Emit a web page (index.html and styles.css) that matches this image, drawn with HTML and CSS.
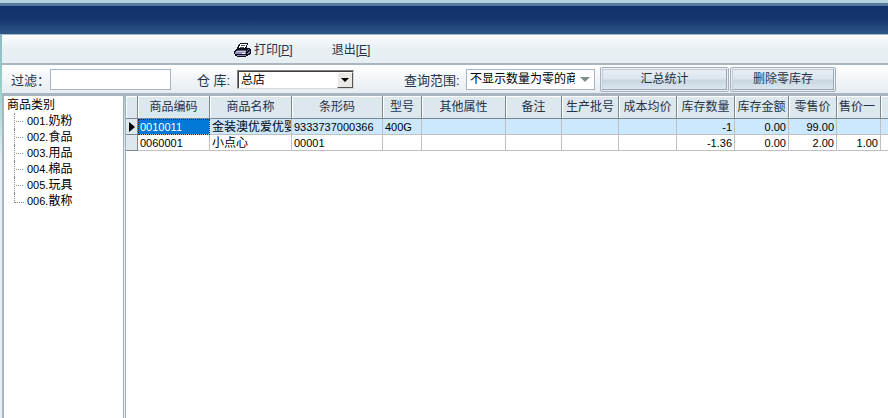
FILE: index.html
```html
<!DOCTYPE html>
<html lang="zh-CN">
<head>
  <meta charset="UTF-8">
  <title>库存查询</title>
  <link rel="stylesheet" href="styles.css">
</head>
<body>

  <div class="banner"></div>

  <div class="window">
    <div class="menu">
      <button type="button" class="menu-btn">
        <svg class="printer" width="17" height="16" viewBox="0 0 17 16" shape-rendering="crispEdges">
          <path d="M6 1h8v2h-1v3h3v1h1v5h-1v1h-2v1h-2v1H3v-1H1v-2H0V9h1V8h1V7h1V5h1V3h1V2h1z" fill="#10101c"/>
          <path d="M6 2h7v1h-1v2h-1v1H5V4h1z" fill="#fff"/>
          <path d="M7 3h4v1H7zM6 5h4v1H6z" fill="#555"/>
          <path d="M3 8h9v1H3z" fill="#5c5c74"/>
          <path d="M2 9h10v1H2z" fill="#c8c8e0"/>
          <path d="M1 10h11v2H1zM3 13h9v1H3z" fill="#8c8cbc"/>
          <path d="M8 11h3v1H8z" fill="#fff"/>
          <path d="M13 8h1V7h1v1h-1v1h-1zM13 11h1v-1h1V9h1v2h-1v1h-2z" fill="#7474a8"/>
        </svg>
        <span>打印[<u>P</u>]</span>
      </button>
      <button type="button" class="menu-btn">退出[<u>E</u>]</button>
    </div>

    <form class="filters">
      <label for="filter">过滤：</label>
      <input type="text" id="filter" name="filter">

      <label for="store" class="store-label">仓 库:</label>
      <div class="select store">
        <select id="store" name="store">
          <option>总店</option>
        </select>
        <span class="drop"></span>
      </div>

      <label for="range" class="range-label">查询范围:</label>
      <div class="select range">
        <select id="range" name="range">
          <option>不显示数量为零的商品</option>
        </select>
        <span class="drop"></span>
      </div>

      <button type="button" class="action summary">汇总统计</button>
      <button type="button" class="action">删除零库存</button>
    </form>

    <div class="content">
      <div class="tree">
        <div class="tree-root">商品类别</div>
        <ul>
          <li><span class="num">001.</span>奶粉</li>
          <li><span class="num">002.</span>食品</li>
          <li><span class="num">003.</span>用品</li>
          <li><span class="num">004.</span>棉品</li>
          <li><span class="num">005.</span>玩具</li>
          <li><span class="num">006.</span>散称</li>
        </ul>
      </div>

      <div class="grid">
        <table>
          <colgroup>
            <col class="w-mark"><col class="w-code"><col class="w-name"><col class="w-bar">
            <col class="w-model"><col class="w-attr"><col class="w-note"><col class="w-batch">
            <col class="w-cost"><col class="w-cost"><col class="w-amount"><col class="w-retail">
            <col class="w-price"><col>
          </colgroup>
          <thead>
            <tr>
              <th></th>
              <th>商品编码</th>
              <th>商品名称</th>
              <th>条形码</th>
              <th>型号</th>
              <th>其他属性</th>
              <th>备注</th>
              <th>生产批号</th>
              <th>成本均价</th>
              <th>库存数量</th>
              <th>库存金额</th>
              <th>零售价</th>
              <th class="cut">售价一</th>
              <th></th>
            </tr>
          </thead>
          <tbody>
            <tr class="current">
              <td class="mark"><span class="pointer"></span></td>
              <td class="num picked">0010011</td>
              <td>金装澳优爱优婴</td>
              <td class="num">9333737000366</td>
              <td class="num">400G</td>
              <td></td>
              <td></td>
              <td></td>
              <td></td>
              <td class="num right">-1</td>
              <td class="num right">0.00</td>
              <td class="num right">99.00</td>
              <td></td>
              <td></td>
            </tr>
            <tr>
              <td class="mark"></td>
              <td class="num">0060001</td>
              <td>小点心</td>
              <td class="num">00001</td>
              <td></td>
              <td></td>
              <td></td>
              <td></td>
              <td></td>
              <td class="num right">-1.36</td>
              <td class="num right">0.00</td>
              <td class="num right">2.00</td>
              <td class="num right">1.00</td>
              <td></td>
            </tr>
          </tbody>
        </table>
      </div>
    </div>
  </div>

</body>
</html>
```
FILE: styles.css
```css
* {
  box-sizing: border-box;
}

body {
  margin: 0;
  min-height: 100vh;
  display: flex;
  flex-direction: column;
  font-family: "Liberation Sans", "Noto Sans CJK SC", sans-serif;
  font-size: 12px;
  line-height: 16px;
  color: #000;
  background: linear-gradient(#8fb9c6 34px, #9bcfc8 90px, #e4f0f6 160px);
}

button, input, select {
  font: inherit;
  margin: 0;
}

.banner {
  height: 34px;
  border-top: 3px solid #b4d3e0;
  background: linear-gradient(#54799a 3px, #12306c 3px, #15356f 16px, #2d5786);
}

.window {
  flex: 1;
  display: flex;
  flex-direction: column;
  margin-left: 2px;
  border-top: 1px solid #a5bccb;
}

/* top menu */
.menu {
  display: flex;
  align-items: center;
  gap: 39px;
  height: 30px;
  padding: 2px 0 0 232px;
  background: linear-gradient(#fcfdfe, #e8eff3 50%, #e8eff3);
  border-bottom: 2px solid #aab6bf;
}

.menu-btn {
  display: flex;
  align-items: center;
  padding: 0;
  border: none;
  background: none;
  color: #26324a;
}

.printer {
  margin-right: 3px;
}

/* filter row */
.filters {
  display: flex;
  align-items: center;
  height: 31px;
  padding-left: 9px;
  background: linear-gradient(#fff, #f4f7fa 40%, #e7edf2);
  border-bottom: 3px solid #a9b4be;
}

.filters label {
  flex: none;
  width: 39px;
  padding-top: 3px;
  font-size: 13px;
  color: #26324a;
}

#filter {
  width: 121px;
  height: 21px;
  padding: 0 3px;
  border: 1px solid #a9b5c1;
  background: #fff;
}

.filters .store-label {
  width: 40px;
  margin-left: 26px;
}

.filters .range-label {
  width: 62px;
  margin-left: 50px;
}

.select {
  position: relative;
  flex: none;
}

.select select {
  display: block;
  width: 100%;
  height: 100%;
  appearance: none;
  border: none;
  border-radius: 0;
  background: #fff;
  color: #000;
}

.store {
  width: 117px;
  height: 19px;
  border: 1px solid;
  border-color: #808080 #d8d8d8 #d8d8d8 #808080;
}

.store select {
  padding: 0 17px 0 2px;
  border-top: 1px solid #404040;
  border-left: 1px solid #404040;
}

.drop {
  position: absolute;
  display: flex;
  align-items: center;
  justify-content: center;
  pointer-events: none;
}

.drop::before {
  content: "";
  border: 4px solid transparent;
  border-top-color: #000;
  border-bottom: none;
}

.store .drop {
  top: 1px;
  right: 0;
  bottom: 0;
  width: 16px;
  background: #ece9e4;
  border: 1px solid;
  border-color: #fff #555 #555 #fff;
}

.range {
  width: 129px;
  height: 21px;
  border: 1px solid #a9b5c1;
}

.range select {
  padding: 0 18px 0 3px;
}

.range .drop {
  top: 0;
  right: 0;
  bottom: 0;
  width: 19px;
  background: #fff;
}

.range .drop::before {
  border-width: 5px;
  border-bottom: none;
  border-top-color: #818c8f;
}

.action {
  width: 106px;
  height: 25px;
  padding: 0;
  border: 1px solid #a4b1bd;
  border-radius: 2px;
  box-shadow: inset 0 0 0 1px #e8eef3, inset -2px -2px 0 #9caab6, inset 2px 2px 0 #c3ced8;
  background: linear-gradient(#e9f0f5, #dbe5ed 48%, #c8d6e1 52%, #dfe9f0);
  color: #26324a;
}

.summary {
  width: 129px;
  margin: 0 1px 0 5px;
}

/* category tree */
.content {
  flex: 1;
  display: flex;
}

.tree {
  flex: none;
  width: 122px;
  padding: 1px 0 0 3px;
  border-left: 2px solid #a9b4c1;
  border-right: 1px solid #a3afb9;
  background: #fff;
}

.tree ul {
  margin: 0;
  padding: 0 0 0 7px;
  list-style: none;
}

.tree li {
  display: flex;
  height: 16px;
}

/* dotted branch lines */
.tree li::before {
  content: "";
  flex: none;
  width: 9px;
  height: 9px;
  margin-right: 3px;
  border-left: 1px dotted #888;
  border-bottom: 1px dotted #888;
}

.tree li:not(:last-child)::before {
  height: 16px;
  border-bottom: none;
  background: repeating-linear-gradient(90deg, transparent 0 1px, #999 1px 2px) 0 8px / 8px 1px no-repeat;
}

.num {
  font-size: 11px;
}

/* stock table */
.grid {
  flex: 1;
  min-width: 0;
  margin-left: 1px;
  border-left: 1px solid #a3afb9;
  background: #fff;
}

table {
  width: 100%;
  table-layout: fixed;
  border-collapse: separate;
  border-spacing: 0;
}

.w-mark { width: 12px; }
.w-code { width: 72px; }
.w-name { width: 82px; }
.w-bar { width: 91px; }
.w-model { width: 39px; }
.w-attr { width: 84px; }
.w-note { width: 56px; }
.w-batch { width: 57px; }
.w-cost { width: 58px; }
.w-amount { width: 54px; }
.w-retail { width: 48px; }
.w-price { width: 44px; }

th, td {
  padding: 0;
  overflow: hidden;
  white-space: nowrap;
}

th {
  height: 23px;
  font-weight: normal;
  color: #26324a;
  background: #dce8ed;
  border-right: 1px solid #7c888f;
  border-bottom: 1px solid #7c888f;
  box-shadow: inset 1px 1px 0 #fff;
}

th.cut {
  padding-left: 2px;
  text-align: left;
}

td {
  height: 16px;
  padding: 1px 2px 0;
  line-height: 14px;
  border-right: 1px solid #c0c0c0;
  border-bottom: 1px solid #c0c0c0;
}

th:last-child, td:last-child {
  border-right: none;
}

td.right {
  text-align: right;
}

.current td {
  background: #cce8ff;
}

td.mark, .current td.mark {
  padding: 0 0 0 3px;
  background: #dce8ed;
  border-color: #7c888f;
}

.pointer {
  display: block;
  width: 0;
  border: 5px solid transparent;
  border-left: 6px solid #000;
  border-right: none;
}

.current td.picked {
  background: #0078d7;
  color: #fff;
  outline: 1px dotted #3a2a10;
  outline-offset: -1px;
}
```
